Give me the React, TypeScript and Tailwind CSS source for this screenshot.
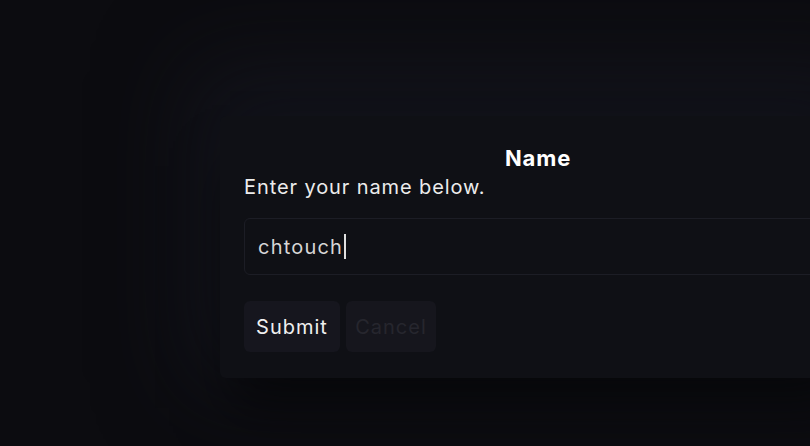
import React from 'react';

export default function App() {
  return (
    <div
      className="h-screen w-full overflow-hidden bg-[#0c0c10] pl-[220px] pt-[116px]"
      style={{ fontFamily: 'Inter, "Noto Sans", sans-serif' }}
    >
      <div className="w-[636px] h-[262px] shrink-0 rounded-md bg-[#0f1015] px-6 pt-[28px] shadow-[0_40px_50px_-10px_rgba(0,0,0,0.55),0_-20px_90px_30px_rgba(24,25,36,0.55)]">
        {/* Header */}
        <h2 className="text-center text-[22px] font-bold leading-[28px] tracking-[0.04em] text-white">Name</h2>
        <p className="mt-[2px] text-[20px] leading-[26px] tracking-[0.045em] text-[#ececec]">Enter your name below.</p>

        {/* Input */}
        <div className="mt-[18px] flex h-[57px] items-center rounded-md border border-[#1c1d25] bg-[#0f1015] px-[13px]">
          <span className="text-[20px] tracking-[0.06em] text-[#d6d6d6]">chtouch</span>
          <span className="ml-[1px] h-[25px] w-[2px] bg-[#e0e0e0]" />
        </div>

        {/* Actions */}
        <div className="mt-[26px] flex gap-[6px]">
          <button className="h-[51px] w-[96px] rounded-md bg-[#16161e] text-[20px] tracking-[0.05em] text-[#f0f0f0]">Submit</button>
          <button className="h-[51px] w-[90px] rounded-md bg-[#16161d] text-[20px] tracking-[0.05em] text-[#26262e]">Cancel</button>
        </div>
      </div>
    </div>
  );
}
